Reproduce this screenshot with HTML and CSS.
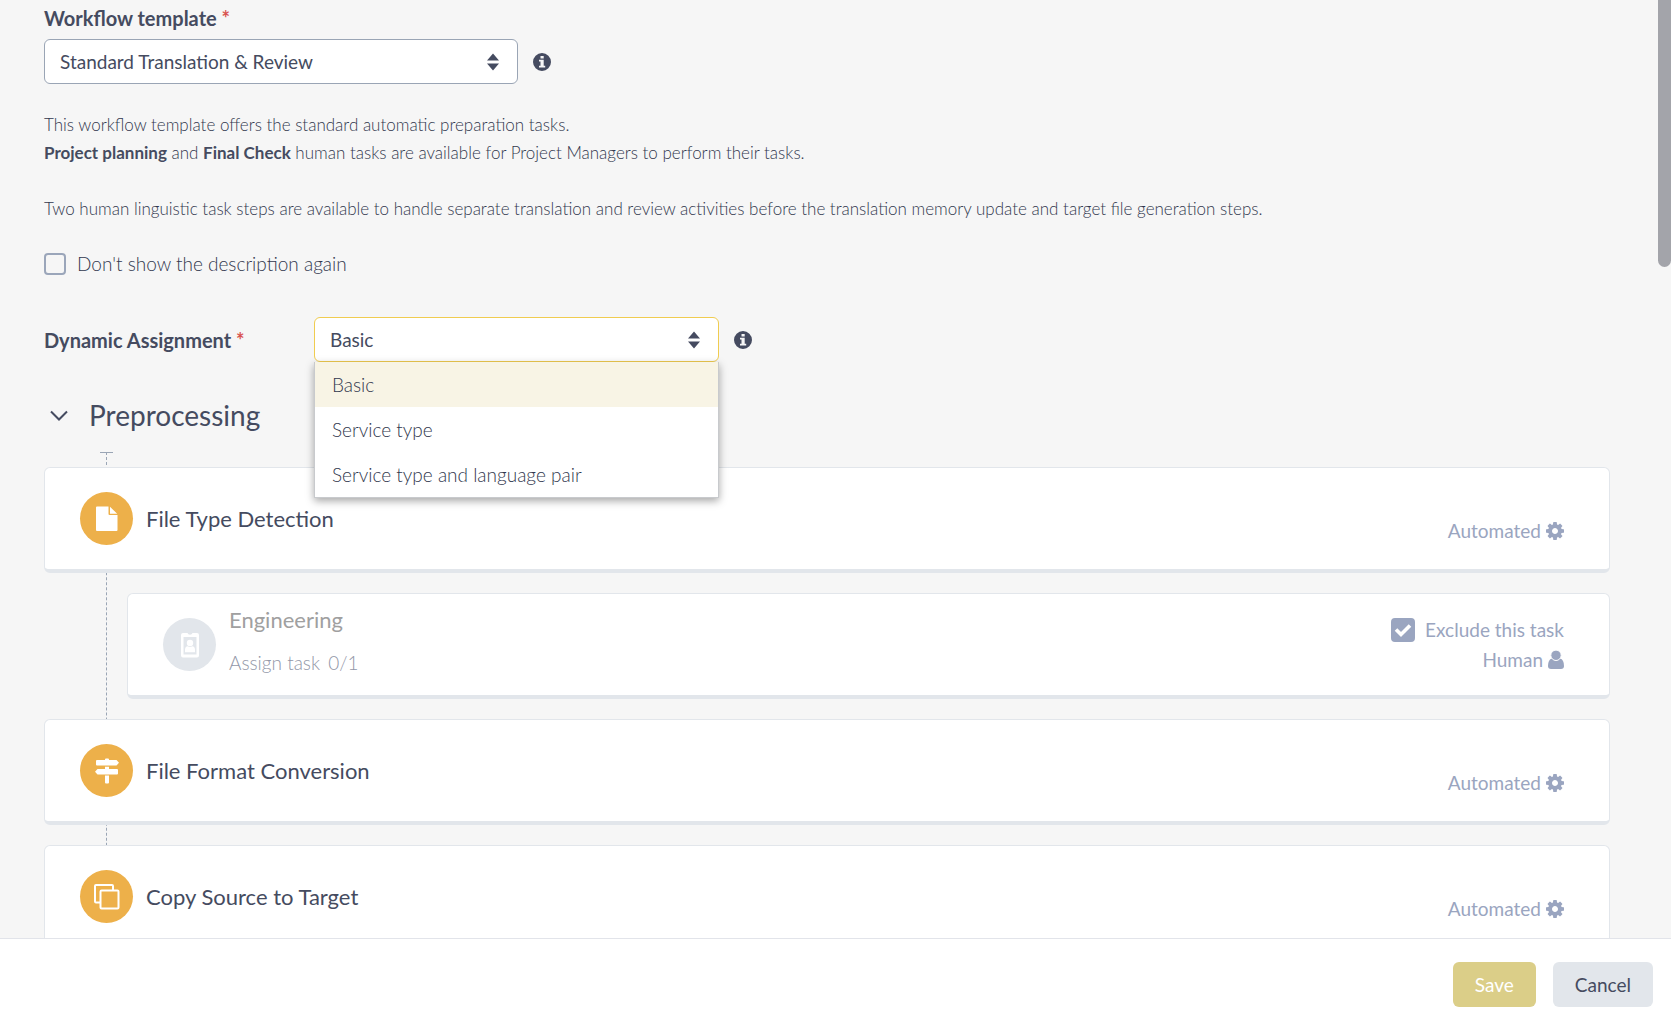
FILE: index.html
```html
<!DOCTYPE html>
<html lang="en">
<head>
    <meta charset="UTF-8">
    <meta name="viewport" content="width=device-width, initial-scale=1.0">
    <title>Workflow settings</title>
    <link rel="stylesheet" href="styles.css">
</head>
<body>
    <!-- Shared icons -->
    <svg class="icon-defs" aria-hidden="true">
        <symbol id="icon-sort" viewBox="0 0 14 18">
            <path d="M7 0.5 13 7.5H1zM7 17.5 13 10.5H1z"/>
        </symbol>
        <symbol id="icon-info" viewBox="0 0 18 18">
            <path fill-rule="evenodd" d="M9 0a9 9 0 1 1 0 18A9 9 0 0 1 9 0zM7.5 2.9v2.5h3.2V2.9zM6 6.8v1.7h1.5v4.3H6v1.8h6.2v-1.8h-1.5v-6z"/>
        </symbol>
        <symbol id="icon-gear" viewBox="0 0 1536 1536">
            <path d="M1024 768q0-106-75-181t-181-75-181 75-75 181 75 181 181 75 181-75 75-181zm512-109v222q0 12-8 23t-20 13l-185 28q-19 54-39 91 35 50 107 138 10 12 10 25t-9 23q-27 37-99 108t-94 71q-12 0-26-9l-138-108q-44 23-91 38-16 136-29 186-7 28-36 28H657q-14 0-24.500-8.500T621 1506l-28-184q-49-16-90-37l-141 107q-10 9-25 9-14 0-25-11-126-114-165-168-7-10-7-23 0-12 8-23 15-21 51-66.500t54-70.500q-27-50-41-99L29 913q-13-2-21-12.500T0 877V655q0-12 8-23t19-13l186-28q14-46 39-92-40-57-107-138-10-12-10-24 0-10 9-23 26-36 98.500-107.500T337 135q13 0 26 10l138 107q44-23 91-38 16-136 29-186 7-28 36-28h222q14 0 24.500 8.500T915 30l28 184q49 16 90 37l142-107q9-9 24-9 13 0 25 10 129 119 165 170 7 8 7 22 0 12-8 23-15 21-51 66.500t-54 70.500q26 50 41 98l183 28q13 2 21 12.500t8 23.500z"/>
        </symbol>
    </svg>

    <main class="content">
        <section class="template">
            <label class="field-label" for="template">Workflow template <span class="required">*</span></label>
            <div class="field-row">
                <div class="select-box">
                    <select id="template" class="select">
                        <option>Standard Translation &amp; Review</option>
                    </select>
                    <svg class="select-icon"><use href="#icon-sort"/></svg>
                </div>
                <svg class="info-icon"><use href="#icon-info"/></svg>
            </div>
            <p class="description">
                This workflow template offers the standard automatic preparation tasks.<br>
                <b>Project planning</b> and <b>Final Check</b> human tasks are available for Project Managers to perform their tasks.<br>
                <br>
                Two human linguistic task steps are available to handle separate translation and review activities before the translation memory update and target file generation steps.
            </p>
            <label class="hide-description">
                <input type="checkbox" class="checkbox">
                Don't show the description again
            </label>
        </section>

        <section class="assignment field-row">
            <label class="field-label" for="assignment">Dynamic Assignment <span class="required">*</span></label>
            <div class="select-box">
                <select id="assignment" class="select open">
                    <option>Basic</option>
                    <option>Service type</option>
                    <option>Service type and language pair</option>
                </select>
                <svg class="select-icon"><use href="#icon-sort"/></svg>
                <!-- Open menu -->
                <ul class="menu" role="listbox">
                    <li class="menu-item selected" role="option" aria-selected="true">Basic</li>
                    <li class="menu-item" role="option">Service type</li>
                    <li class="menu-item" role="option">Service type and language pair</li>
                </ul>
            </div>
            <svg class="info-icon"><use href="#icon-info"/></svg>
        </section>

        <section>
            <h2 class="section-title">
                <svg class="chevron" viewBox="0 0 18 11"><path d="M1 1.500 9 9.500 17 1.500"/></svg>
                Preprocessing
            </h2>

            <div class="steps">
                <article class="card">
                    <span class="badge">
                        <svg width="22" height="26" viewBox="0 0 22 26"><path d="M1 0.500h11.500v7.500q0 1 1 1H21.500V24q0 1-1 1H1q-1 0-1-1V1.500q0-1 1-1zM14 0.800 21.200 7.800H14z"/></svg>
                    </span>
                    <h3 class="card-title">File Type Detection</h3>
                    <span class="kind">Automated <svg class="gear"><use href="#icon-gear"/></svg></span>
                </article>

                <article class="card excluded">
                    <span class="badge">
                        <svg width="18" height="26" viewBox="0 0 18 26"><path fill-rule="evenodd" d="M2 1h4.500q.5 1.700 2.500 1.700T11.500 1H16q2 0 2 2v20.500q0 2-2 2H2q-2 0-2-2V3q0-2 2-2zM2.500 5v17.500h13V5z"/><circle cx="9" cy="11" r="3.200"/><path d="M4 20.200v-2.400q0-3.300 2.800-3.600 2.200 1.600 4.400 0 2.800.3 2.800 3.600v2.400z"/></svg>
                    </span>
                    <div class="card-body">
                        <h3 class="card-title">Engineering</h3>
                        <p class="assign">Assign task <span>0/1</span></p>
                    </div>
                    <div class="card-side">
                        <label class="exclude">
                            <input type="checkbox" class="checkbox" checked>
                            Exclude this task
                        </label>
                        <span class="kind">Human
                            <svg class="person" viewBox="0 0 16 20"><path d="M4 8.500h8q4 1 4 7.500 0 3-3 3H3q-3 0-3-3 0-6.500 4-7.500z"/><circle cx="8" cy="5.300" r="5.200" stroke="#fff"/></svg>
                        </span>
                    </div>
                </article>

                <article class="card">
                    <span class="badge">
                        <svg width="24" height="26" viewBox="0 0 24 26"><path d="M10 2V1.500Q10 .5 11 .5h2q1 0 1 1V2h7.500L24 4.700l-2.500 2.800H2q-1 0-1-1V3q0-1 1-1zM10 8.700h4v2.300h8q1 0 1 1v3.500q0 1-1 1H2.500L0 13.700l2.500-2.700H10zM10 17.500h4v7q0 1-1 1h-2q-1 0-1-1z"/></svg>
                    </span>
                    <h3 class="card-title">File Format Conversion</h3>
                    <span class="kind">Automated <svg class="gear"><use href="#icon-gear"/></svg></span>
                </article>

                <article class="card">
                    <span class="badge">
                        <svg class="outline" width="26" height="26" viewBox="0 0 26 26"><path d="M6.500 18.500H2q-1 0-1-1V2q0-1 1-1h16q1 0 1 1v4.500"/><rect x="6.500" y="6.500" width="18" height="18" rx="1"/></svg>
                    </span>
                    <h3 class="card-title">Copy Source to Target</h3>
                    <span class="kind">Automated <svg class="gear"><use href="#icon-gear"/></svg></span>
                </article>
            </div>
        </section>
        <div class="scroll-thumb"></div>
    </main>

    <footer class="footer">
        <button type="button" class="btn btn-save">Save</button>
        <button type="button" class="btn btn-cancel">Cancel</button>
    </footer>
</body>
</html>
```
FILE: styles.css
```css
/* Page */
* {
    box-sizing: border-box;
}

body {
    margin: 0;
    height: 100vh;
    display: flex;
    flex-direction: column;
    background-color: #f6f6f6;
    color: #454b60;
    font-family: Lato, "Liberation Sans", sans-serif;
    font-size: 19px;
    line-height: 28px;
}

h2, h3, p, ul {
    margin: 0;
    padding: 0;
    font-weight: 400;
}

svg {
    flex: none;
    fill: currentColor;
}

.icon-defs {
    position: absolute;
    width: 0;
    height: 0;
}

.content {
    position: relative;
    flex: 1;
    min-height: 0;
    overflow: hidden;
    padding: 4px 61px 0 44px;
}

/* Scrollbar thumb over the content */
.scroll-thumb {
    position: absolute;
    top: 0;
    right: 0;
    width: 13px;
    height: 267px;
    border-radius: 0 0 7px 7px;
    background-color: #a3a4aa;
}

/* Form fields */
.field-label {
    font-size: 20px;
    font-weight: 700;
}

.required {
    color: #d9534f;
}

.field-row {
    display: flex;
    align-items: center;
    gap: 15px;
}

.template .field-row {
    margin-top: 6px;
}

.select-box {
    position: relative;
    width: 474px;
}

.select {
    display: block;
    width: 100%;
    height: 45px;
    padding: 0 48px 0 15px;
    appearance: none;
    border: 1px solid #9aa5b5;
    border-radius: 6px;
    background-color: #fff;
    color: inherit;
    font: inherit;
}

.select.open {
    border-color: #f0cc50;
}

.select-icon {
    position: absolute;
    top: 14px;
    right: 18px;
    width: 14px;
    height: 18px;
    pointer-events: none;
}

.info-icon {
    width: 18px;
    height: 18px;
}

.description {
    margin-top: 27px;
    color: #32384e;
    font-size: 17px;
    font-weight: 300;
}

.description b {
    color: #454b60;
    font-weight: 700;
}

.checkbox {
    width: 22px;
    height: 22px;
    margin: 0;
    appearance: none;
    border: 2px solid #9ba6ba;
    border-radius: 4px;
}

.checkbox:checked {
    width: 24px;
    height: 24px;
    border-color: #9aa5c0;
    background: #9aa5c0 url("data:image/svg+xml,%3Csvg xmlns='http://www.w3.org/2000/svg' viewBox='0 0 20 20'%3E%3Cpath d='M3 9.500 8 14.500 17 5.500' fill='none' stroke='white' stroke-width='3.600'/%3E%3C/svg%3E") center / 20px;
}

.hide-description {
    display: flex;
    align-items: center;
    gap: 11px;
    margin-top: 27px;
    color: #32384e;
    font-weight: 300;
}

.assignment {
    margin-top: 39px;
}

.assignment .field-label {
    width: 255px;
}

.assignment .select-box {
    width: 405px;
}

/* Opened list */
.menu {
    position: absolute;
    top: 100%;
    left: 0;
    right: 0;
    z-index: 2;
    border: 1px solid #c8cacd;
    border-top: 0;
    background-color: #fff;
    box-shadow: 0 3px 8px rgba(0, 0, 0, 0.35);
    color: #32384e;
    list-style: none;
    font-weight: 300;
}

.menu-item {
    padding: 0 17px;
    line-height: 45px;
}

.menu-item.selected {
    background-color: #f8f4e5;
}

/* Workflow steps */
.section-title {
    display: flex;
    align-items: center;
    gap: 21px;
    margin-top: 35px;
    padding-left: 6px;
    font-size: 28px;
    line-height: 36px;
}

.chevron {
    width: 18px;
    height: 11px;
    fill: none;
    stroke: currentColor;
    stroke-width: 2;
}

.steps {
    position: relative;
    display: flex;
    flex-direction: column;
    gap: 20px;
    margin-top: 19px;
    padding-top: 15px;
}

/* Connector line behind the cards */
.steps::before {
    content: "";
    position: absolute;
    top: 0;
    bottom: 0;
    left: 62px;
    border-left: 1px dashed #9aa5b5;
}

.steps::after {
    content: "";
    position: absolute;
    top: 0;
    left: 56px;
    width: 13px;
    border-top: 1px solid #9aa5b5;
}

.card {
    position: relative;
    display: flex;
    align-items: center;
    gap: 13px;
    height: 106px;
    padding: 0 45px 0 35px;
    border: 1px solid #e2e6eb;
    border-bottom-width: 4px;
    border-radius: 6px;
    background-color: #fff;
}

.badge {
    display: flex;
    align-items: center;
    justify-content: center;
    width: 53px;
    height: 53px;
    border-radius: 50%;
    background-color: #edb04a;
    color: #fff;
}

.outline {
    fill: none;
    stroke: currentColor;
    stroke-width: 2;
}

.card-title {
    font-size: 22px;
}

.kind {
    display: flex;
    align-items: center;
    gap: 5px;
    margin-left: auto;
    color: #9aa5c0;
}

.card > .kind {
    padding-top: 24px;
}

.gear {
    width: 18px;
    height: 18px;
}

.person {
    width: 16px;
    height: 20px;
}

.excluded {
    margin-left: 83px;
    color: #a0a0a0;
}

.excluded .badge {
    background-color: #e2e6eb;
}

.card-body {
    display: flex;
    flex-direction: column;
    gap: 15px;
    padding-bottom: 7px;
}

.assign {
    color: #9297a8;
    font-weight: 300;
}

.assign span {
    margin-left: 3px;
}

.card-side {
    display: flex;
    flex-direction: column;
    gap: 2px;
    margin-left: auto;
    color: #9aa5c0;
}

.exclude {
    display: flex;
    align-items: center;
    gap: 10px;
}

/* Footer */
.footer {
    display: flex;
    justify-content: flex-end;
    gap: 17px;
    padding: 23px 18px 17px;
    border-top: 1px solid #e2e4ea;
    background-color: #fff;
}

.btn {
    height: 45px;
    padding: 0 22px;
    border: 0;
    border-radius: 6px;
    font: inherit;
    cursor: pointer;
}

.btn-save {
    background-color: #dbce88;
    color: #fff;
}

.btn-cancel {
    background-color: #e2e6eb;
    color: #454b60;
}
```
